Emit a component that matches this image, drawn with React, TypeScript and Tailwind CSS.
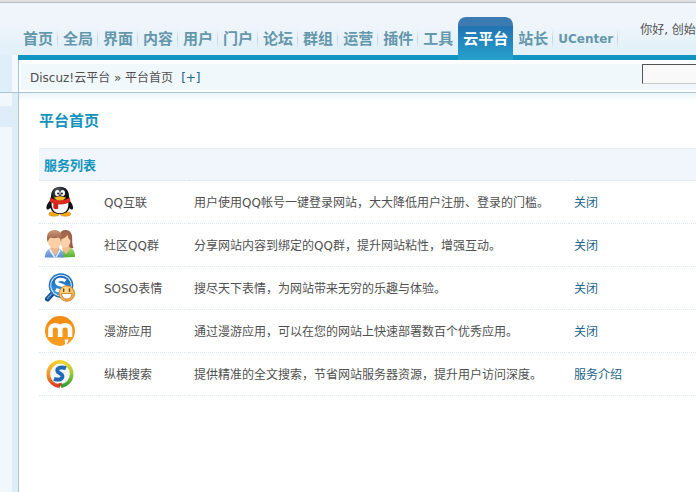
import React from 'react';

const tabs = ['首页', '全局', '界面', '内容', '用户', '门户', '论坛', '群组', '运营', '插件', '工具', '云平台', '站长', 'UCenter'];
const activeTab = '云平台';

const QQIcon = () => (
    <svg viewBox="0 0 32 32" className="block size-8" aria-hidden="true">
        <defs>
            <radialGradient id="qq-head" cx="0.4" cy="0.15" r="0.8">
                <stop offset="0" stopColor="#5a6068" />
                <stop offset="0.45" stopColor="#15181d" />
                <stop offset="1" stopColor="#050608" />
            </radialGradient>
        </defs>
        <ellipse cx="10" cy="28" rx="5.2" ry="2.2" fill="#f7a916" stroke="#c67a10" strokeWidth="0.5" />
        <ellipse cx="21.500" cy="28" rx="5.2" ry="2.2" fill="#f7a916" stroke="#c67a10" strokeWidth="0.5" />
        <path d="M8 13C4.500 15.500 2 19.500 2.500 22.500C2.800 24.500 5.200 23.500 7.500 21ZM23.500 13C27 15.500 29.500 19.500 29 22.500C28.700 24.500 26.300 23.500 24 21Z" fill="#111419" />
        <path d="M16 0.800C10 0.800 7 5 7 10.500C6 14 5.600 17 6 20C6.600 25 10.500 28 16 28C21.500 28 25.400 25 26 20C26.400 17 26 14 25 10.500C25 5 22 0.800 16 0.800Z" fill="url(#qq-head)" />
        <path d="M7.800 15C6.800 23 9.800 27.300 16 27.300C22.200 27.300 25.200 23 24.200 15Z" fill="#f4f6f8" />
        <path d="M6.500 11.500C11 15 21 15 25.500 11.500L26.500 15.200C21.500 19.600 10.500 19.600 5.500 15.200Z" fill="#dd2a20" />
        <path d="M9.500 16.500L14.200 17.800V22.800Q11.500 23.800 9.300 22.300Z" fill="#d0201a" />
        <ellipse cx="13.300" cy="7" rx="2.300" ry="2.900" fill="#fff" />
        <ellipse cx="18.700" cy="7" rx="2.300" ry="2.900" fill="#fff" />
        <circle cx="14.100" cy="7.500" r="1" fill="#111" />
        <circle cx="17.900" cy="7.500" r="1" fill="#111" />
        <path d="M9.800 11.700Q16 8.700 22.200 11.700Q19.500 14.500 16 14.500Q12.500 14.500 9.800 11.700Z" fill="#f9b91e" />
    </svg>
);

const GroupIcon = () => (
    <svg viewBox="0 0 32 32" className="block size-8" aria-hidden="true">
        <defs>
            <linearGradient id="man-hair" x1="0" y1="0" x2="0" y2="1">
                <stop offset="0" stopColor="#cf997a" />
                <stop offset="1" stopColor="#8f563f" />
            </linearGradient>
            <linearGradient id="man-shirt" x1="0" y1="0" x2="0" y2="1">
                <stop offset="0" stopColor="#9dc0ee" />
                <stop offset="1" stopColor="#5b8dd4" />
            </linearGradient>
            <linearGradient id="woman-shirt" x1="0" y1="0" x2="0" y2="1">
                <stop offset="0" stopColor="#b0e27c" />
                <stop offset="1" stopColor="#54ab32" />
            </linearGradient>
        </defs>
        <path d="M21.500 1C26.500 1 28.500 5 28.200 10C28 14 28.500 16.500 29.500 19L20 19.500L15.500 12C14.500 5 16.500 1 21.500 1Z" fill="#995d46" />
        <path d="M17 28.500L19 20.500L24 18C29 19 31 21.500 31 28Z" fill="url(#woman-shirt)" />
        <path d="M19.500 15L25 15.500L26 20L22 25L18 20Z" fill="#f3bd91" />
        <ellipse cx="21" cy="12" rx="5.500" ry="6.500" fill="#fbd2ab" />
        <path d="M15.500 10Q21.500 10 23.500 5.500Q24 10 27 12Q28 3 21.500 2.500Q16 3 15.500 10Z" fill="#a5684d" />
        <path d="M0.800 28.500C1 22.500 4 20 8 18.500L14 19C18 20.500 19.500 23 19.500 28.500Z" fill="url(#man-shirt)" />
        <path d="M6.500 19L11.500 28L15.500 20L16.500 22L12.500 28.500H10L5 21Z" fill="#e3eefb" />
        <path d="M7 16H14.500L15 20L11.500 26.500L6.500 20Z" fill="#efb58a" />
        <ellipse cx="10.500" cy="12" rx="6.700" ry="7.500" fill="#fbd0a7" />
        <path d="M3.500 13C1.500 4.500 5.500 1 10.500 1C16.500 1 19 5 17 13Q17 10 15 8.500Q9 10 6.500 8.500Q4.500 10 3.500 13Z" fill="url(#man-hair)" />
    </svg>
);

const EmojiSearchIcon = () => (
    <svg viewBox="0 0 32 32" className="block size-8" aria-hidden="true">
        <defs>
            <linearGradient id="lens" x1="0" y1="0" x2="0" y2="1">
                <stop offset="0" stopColor="#1763b5" />
                <stop offset="1" stopColor="#359de5" />
            </linearGradient>
            <radialGradient id="smile" cx="0.4" cy="0.3" r="0.7">
                <stop offset="0" stopColor="#ffe29a" />
                <stop offset="1" stopColor="#f0a941" />
            </radialGradient>
        </defs>
        <path d="M9 21L3.500 27" stroke="#174e91" strokeWidth="5" strokeLinecap="round" />
        <path d="M8 21.500L3.500 26.500" stroke="#5c9bd8" strokeWidth="1.500" strokeLinecap="round" />
        <circle cx="17" cy="13.500" r="12.300" fill="#1f6fc0" />
        <circle cx="17" cy="13.500" r="10.800" fill="#d3e9fa" />
        <circle cx="17" cy="13.500" r="9.800" fill="url(#lens)" />
        <path d="M21.500 9C18.500 6.500 12.500 7 12.700 10.300C13 13.700 21.500 12.300 21 16.200C20.500 19.500 15 19.500 11.800 17.500" fill="none" stroke="#fff" strokeWidth="3.400" />
        <circle cx="22.800" cy="21.500" r="7.800" fill="url(#smile)" stroke="#c98127" strokeWidth="0.900" />
        <path d="M19.700 17V19.300M25.500 17V19.300" stroke="#7d4a14" strokeWidth="1.500" strokeLinecap="round" />
        <path d="M17.500 21.500H28Q27.500 27 22.700 27Q18 27 17.500 21.500Z" fill="#fff" stroke="#c1741f" strokeWidth="0.800" />
    </svg>
);

const ManyouIcon = () => (
    <svg viewBox="0 0 32 32" className="block size-8" aria-hidden="true">
        <defs>
            <linearGradient id="manyou" x1="0" y1="0" x2="0" y2="1">
                <stop offset="0" stopColor="#f28a10" />
                <stop offset="1" stopColor="#f9a024" />
            </linearGradient>
        </defs>
        <circle cx="16" cy="16" r="15" fill="url(#manyou)" />
        <path d="M6.500 22V14.500C6.500 8.800 16.200 8.800 16.200 14.500V22M16.200 14.500C16.200 8.800 26 8.800 26 14.500V22" fill="none" stroke="#fff" strokeWidth="4.600" />
        <path d="M20.500 24.500H24.500Q24 27.500 22 30L20.500 30.500Q22 27 20.500 24.500Z" fill="#fff" />
    </svg>
);

const SearchIcon = () => (
    <svg viewBox="0 0 32 32" className="block size-8" aria-hidden="true">
        <defs>
            <linearGradient id="ring-left" x1="0" y1="0" x2="0" y2="1">
                <stop offset="0" stopColor="#f3cf2b" />
                <stop offset="0.550" stopColor="#ee922c" />
                <stop offset="1" stopColor="#da3d22" />
            </linearGradient>
            <linearGradient id="ring-right" x1="0" y1="0" x2="0" y2="1">
                <stop offset="0" stopColor="#f0d52e" />
                <stop offset="0.450" stopColor="#a2cc38" />
                <stop offset="1" stopColor="#2f9e37" />
            </linearGradient>
        </defs>
        <circle cx="16" cy="16" r="12" fill="#f3f6f8" />
        <path d="M16 3.800A12.200 12.200 0 0 0 15 28.100" fill="none" stroke="url(#ring-left)" strokeWidth="3.600" />
        <path d="M16 3.800A12.200 12.200 0 0 1 17 28.100" fill="none" stroke="url(#ring-right)" strokeWidth="3.600" />
        <path d="M14.200 25.500L18 24.800L15.500 30.300Z" fill="#d92f18" />
        <path d="M22 10.300C18 8.600 13.300 9.600 13.300 12.500C13.300 15.500 19 15.300 18.400 18.800C17.800 22 13.500 22 10 20.800" fill="none" stroke="#1f6bb3" strokeWidth="3.900" />
    </svg>
);

const services = [
    { name: 'QQ互联', icon: QQIcon, desc: '用户使用QQ帐号一键登录网站，大大降低用户注册、登录的门槛。', action: '关闭' },
    { name: '社区QQ群', icon: GroupIcon, desc: '分享网站内容到绑定的QQ群，提升网站粘性，增强互动。', action: '关闭' },
    { name: 'SOSO表情', icon: EmojiSearchIcon, desc: '搜尽天下表情，为网站带来无穷的乐趣与体验。', action: '关闭' },
    { name: '漫游应用', icon: ManyouIcon, desc: '通过漫游应用，可以在您的网站上快速部署数百个优秀应用。', action: '关闭' },
    { name: '纵横搜索', icon: SearchIcon, desc: '提供精准的全文搜索，节省网站服务器资源，提升用户访问深度。', action: '服务介绍' },
];

const Header: React.FC = () => (
    <header className="flex h-[55px] items-end border-t-2 border-[#dedede] pl-[18px] shadow-[inset_0_1px_0_#b3bcc3]">
        <nav className="shrink-0">
            <ul className="flex items-start font-bold">
                {tabs.map((tab) => (
                    <li key={tab}>
                        {tab === activeTab ? (
                            // Hangs over the blue rule below the tabs
                            <a href="#" className="relative z-10 -mb-[5px] block h-[43px] rounded-t-lg bg-linear-to-b from-[#3c7ab2] from-20% via-[#2272b1] via-20% to-[#25a2cc] px-[5px] pt-3 text-[15px] leading-5 text-white">
                                {tab}
                            </a>
                        ) : (
                            <a href="#" className="flex pt-3 pl-[5px] text-[#6497ab]">
                                <span className={tab === 'UCenter' ? 'text-xs leading-5' : 'text-[15px] leading-5'}>{tab}</span>
                                <span className={tab === '工具' ? 'ml-1 w-px' : 'ml-1 h-5 w-px bg-linear-to-b from-transparent via-[#c3d3df] to-transparent'} />
                            </a>
                        )}
                    </li>
                ))}
            </ul>
        </nav>
        <p className="ml-[22px] self-start pt-[18px] leading-5 whitespace-nowrap">你好, 创始</p>
    </header>
);

const Breadcrumb: React.FC = () => (
    <div className="flex bg-[#e0eefa]">
        <div className="w-3 shrink-0" />
        <div className="w-1.5 shrink-0 bg-[#f3f9fd]" />
        <div className="flex min-w-0 flex-1 flex-col border-t-[5px] border-[#1094c1] bg-white">
            <div className="flex border-l border-[#a9c4d2] pt-1 pb-0.5">
                <div className="ml-0.5 flex h-[26px] min-w-0 flex-1 bg-[#f1f8fb]">
                    <p className="w-[621px] shrink-0 pt-1 pl-[9px] leading-5 whitespace-nowrap">
                        Discuz!云平台 » 平台首页
                        <a href="#" className="ml-2 text-[#236280]">[+]</a>
                    </p>
                    <input type="text" aria-label="搜索" className="h-5 min-w-0 flex-1 border border-r-0 border-[#c9c9c9] border-t-[#555] border-l-[#555] bg-[#f9f9f9] px-1" />
                </div>
            </div>
        </div>
    </div>
);

const ServiceTable: React.FC = () => (
    <table className="mt-[17px] w-full table-fixed border-collapse">
        <colgroup>
            <col className="w-[60px]" />
            <col className="w-[90px]" />
            <col className="w-[380px]" />
            <col />
        </colgroup>
        <thead>
            <tr className="h-8 border-t border-b border-t-[#e6eff6] border-b-[#dde9ef] bg-[#f0f6fc] [border-bottom-style:dotted]">
                <th colSpan={4} className="px-[5px] pt-0.5 text-left text-[13px] text-[#1494bd]">服务列表</th>
            </tr>
        </thead>
        <tbody>
            {services.map(({ name, icon: Icon, desc, action }) => (
                <tr key={name} className="h-[43px] border-b border-dotted border-[#dde9ef]">
                    <td className="px-[5px]"><Icon /></td>
                    <td className="px-[5px] pt-0.5 whitespace-nowrap">{name}</td>
                    <td className="px-[5px] pt-0.5 whitespace-nowrap">{desc}</td>
                    <td className="px-[5px] pt-0.5"><a href="#" className="text-[#22648a]">{action}</a></td>
                </tr>
            ))}
        </tbody>
    </table>
);

const App: React.FC = () => {
    return (
        <div className="flex min-h-screen flex-col overflow-hidden bg-white font-['DejaVu_Sans','Noto_Sans_CJK_SC',sans-serif] text-xs text-[#505050]">
            <div className="bg-linear-to-b from-[#f0f5fb] from-25% via-[#e4f1f9] via-50% to-[#e6f1fb]">
                <Header />
                <Breadcrumb />
            </div>

            <div className="flex flex-1 border-t border-[#a9c4d2]">
                {/* Collapsed side menu */}
                <aside className="w-3 shrink-0 bg-[#f1f8fc] pt-[13px]">
                    <div className="h-[21px] bg-[#deedf8]" />
                </aside>
                <div className="w-1.5 shrink-0 bg-[#deedf6]" />

                <main className="min-w-0 flex-1 border-l border-[#a9c4d2] bg-linear-to-b from-[#e8f3f9] to-white to-[8px] pt-[18px] pl-5">
                    <h1 className="text-[15px] leading-5 font-bold text-[#1494bd]">平台首页</h1>
                    <ServiceTable />
                </main>
            </div>
        </div>
    );
};

export default App;
